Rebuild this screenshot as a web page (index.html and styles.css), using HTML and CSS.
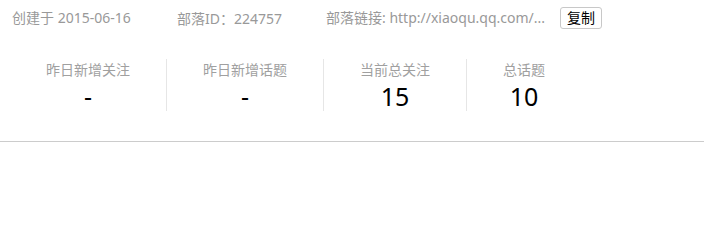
FILE: index.html
```html
<!DOCTYPE html>
<html lang="zh-CN">
<head>
<meta charset="utf-8">
<title>部落信息</title>
<link rel="stylesheet" href="styles.css">
</head>
<body>
<div class="panel">
  <div class="info">
    <span class="info-item info-created">创建于 2015-06-16</span>
    <span class="info-item info-id">部落ID<span class="cjk">：</span>224757</span>
    <span class="info-item info-link">部落链接: http://xiaoqu.qq.com/...</span>
    <button class="copy-btn" type="button">复制</button>
  </div>
  <div class="stats">
    <div class="stat">
      <div class="stat-label">昨日新增关注</div>
      <div class="stat-value">-</div>
    </div>
    <div class="stat">
      <div class="stat-label">昨日新增话题</div>
      <div class="stat-value">-</div>
    </div>
    <div class="stat">
      <div class="stat-label">当前总关注</div>
      <div class="stat-value">15</div>
    </div>
    <div class="stat">
      <div class="stat-label">总话题</div>
      <div class="stat-value">10</div>
    </div>
  </div>
</div>
</body>
</html>
```

FILE: styles.css
```css
html, body {
  margin: 0;
  padding: 0;
  background: #fff;
}

body {
  font-family: "Noto Sans", "Noto Sans CJK SC", sans-serif;
  font-size: 14px;
  color: #999;
}

.cjk {
  font-family: "Noto Sans CJK SC", sans-serif;
}

.panel {
  border-bottom: 1px solid #cccccc;
  height: 142px;
  box-sizing: border-box;
}

.info {
  display: flex;
  align-items: center;
  padding: 7px 0 0 12px;
  height: 22px;
}

.info-item {
  line-height: 22px;
  white-space: nowrap;
}

.info-created {
  width: 165px;
}

.info-id {
  width: 149px;
}

.info-link {
  width: 234px;
}

.copy-btn {
  height: 22px;
  padding: 0 6px;
  margin: 0;
  border: 1px solid #c8c8c8;
  border-radius: 3px;
  background: #fff;
  color: #000;
  font-family: inherit;
  font-size: 14px;
  line-height: 20px;
}

.stats {
  display: flex;
  margin-top: 30px;
  padding-left: 10px;
}

.stat {
  padding: 0 36px;
  text-align: center;
  height: 52px;
}

.stat + .stat {
  border-left: 1px solid #e6e6e6;
}

.stat-label {
  line-height: 22px;
  color: #a0a0a0;
  white-space: nowrap;
}

.stat-value {
  font-size: 25px;
  line-height: 30px;
  color: #000;
}
```
